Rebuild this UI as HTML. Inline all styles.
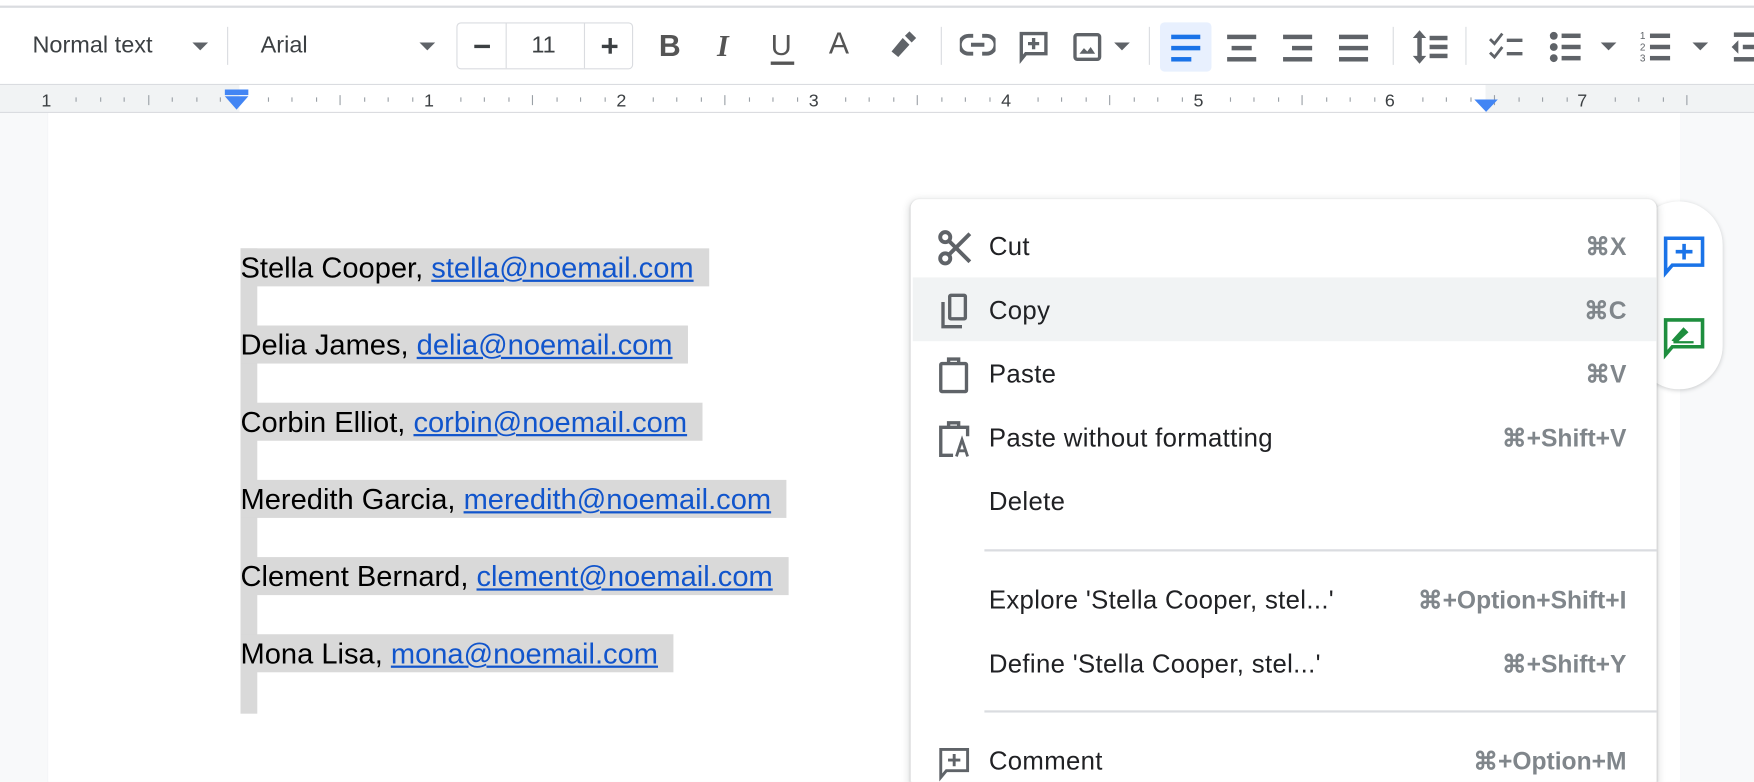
<!DOCTYPE html>
<html><head><meta charset="utf-8"><style>
*{margin:0;padding:0;box-sizing:border-box}
html,body{width:1754px;height:782px;overflow:hidden;background:#fff}
#w{position:absolute;left:0;top:0;width:1568px;height:699px;transform:scale(1.11862);transform-origin:0 0;font-family:"Liberation Sans",Arial,sans-serif;overflow:hidden;background:#f8f9fa}
.a{position:absolute}
.tb{color:#3c4043;font-size:21px}
.sep{position:absolute;top:24px;width:1px;height:34px;background:#dadce0}
.car{position:absolute;width:0;height:0;border-left:7px solid transparent;border-right:7px solid transparent;border-top:7px solid #5f6368}
.ln{position:absolute;left:215px;font-size:26px;color:#000;height:34px;line-height:34px;background:#d9d9d9;padding-right:14px;white-space:nowrap}
.ln u{color:#1155cc;text-decoration:underline}
.mi{position:absolute;left:0;right:0;height:57px;line-height:57px;font-size:23px;color:#202124;letter-spacing:.3px}
.mi .t{position:absolute;left:70px}
.mi .k{position:absolute;right:27px;color:#80868b;font-weight:bold;font-size:22px;letter-spacing:0}
.mi svg{position:absolute;left:24px;top:13px}
</style></head><body><div id="w">
<div class="a" style="left:0;top:0;width:1568px;height:76px;background:#fff"></div>
<div class="a" style="left:0;top:5px;width:1568px;height:2px;background:#dadce0"></div>
<div class="a tb" style="left:29px;top:29px">Normal text</div>
<div class="car" style="left:172px;top:38px"></div>
<div class="sep" style="left:203px"></div>
<div class="a tb" style="left:233px;top:29px">Arial</div>
<div class="car" style="left:375px;top:38px"></div>
<div class="a" style="left:408px;top:20px;width:158px;height:42px;border:1px solid #dadce0;border-radius:4px"></div>
<div class="a" style="left:452px;top:21px;width:1px;height:40px;background:#dadce0"></div>
<div class="a" style="left:522px;top:21px;width:1px;height:40px;background:#dadce0"></div>
<div class="a" style="left:424px;top:40px;width:14px;height:3px;background:#3c4043"></div>
<div class="a tb" style="left:475px;top:29px">11</div>
<div class="a" style="left:538px;top:40px;width:14px;height:3px;background:#3c4043"></div>
<div class="a" style="left:543.5px;top:34px;width:3px;height:14px;background:#3c4043"></div>
<div class="a" style="left:589px;top:26px;font-size:27px;font-weight:bold;color:#555">B</div>
<div class="a" style="left:641px;top:26px;font-size:27px;font-style:italic;color:#555;font-family:'Liberation Serif',serif;font-weight:bold">I</div>
<div class="a" style="left:689px;top:25px;font-size:26px;color:#555">U</div>
<div class="a" style="left:689px;top:55px;width:21px;height:3px;background:#555"></div>
<div class="a" style="left:741px;top:24px;font-size:27px;color:#555">A</div>
<svg class="a" style="left:793px;top:26px" width="28" height="26"><path d="M4 20 l10-12 6 6-10 11z M16 6 l4-4 6 6-4 4z" fill="#5f6368"/></svg>
<div class="sep" style="left:841px"></div>
<svg class="a" style="left:858px;top:29px" width="32" height="22" fill="none" stroke="#5f6368" stroke-width="3.5"><path d="M12 3H8a8 8 0 000 16h4M20 3h4a8 8 0 010 16h-4M10 11h12"/></svg>
<svg class="a" style="left:910px;top:27px" width="28" height="30" fill="none" stroke="#5f6368" stroke-width="3"><path d="M3 3h22v18H7l-4 5z M14 7v10M9 12h10"/></svg>
<svg class="a" style="left:959px;top:29px" width="28" height="28" fill="none" stroke="#5f6368" stroke-width="3"><rect x="2" y="2" width="22" height="22" rx="2"/><path d="M6 19l4-5 3 3 3-4 4 6z" fill="#5f6368" stroke="none"/></svg>
<div class="car" style="left:996px;top:38px"></div>
<div class="sep" style="left:1027px"></div>
<div class="a" style="left:1037px;top:20px;width:46px;height:44px;background:#e8f0fe;border-radius:4px"></div>
<svg class="a" style="left:1045px;top:29px" width="190" height="28">
<g fill="#1a73e8"><rect x="2" y="2" width="26" height="4"/><rect x="2" y="12" width="26" height="4"/><rect x="2" y="22" width="18" height="4"/></g>
<g fill="#5f6368"><rect x="52" y="2" width="26" height="4"/><rect x="56" y="12" width="18" height="4"/><rect x="52" y="22" width="26" height="4"/>
<rect x="102" y="2" width="26" height="4"/><rect x="110" y="12" width="18" height="4"/><rect x="102" y="22" width="26" height="4"/>
<rect x="152" y="2" width="26" height="4"/><rect x="152" y="12" width="26" height="4"/><rect x="152" y="22" width="26" height="4"/></g></svg>
<div class="sep" style="left:1245px"></div>
<svg class="a" style="left:1262px;top:26px" width="34" height="32" fill="#5f6368"><path d="M7 1l6 7H9v16h4l-6 7-6-7h4V8H1z"/><rect x="16" y="6" width="16" height="4"/><rect x="16" y="14" width="16" height="4"/><rect x="16" y="22" width="16" height="4"/></svg>
<div class="sep" style="left:1310px"></div>
<svg class="a" style="left:1330px;top:28px" width="34" height="28" fill="none" stroke="#5f6368" stroke-width="2.5"><path d="M2 7l4 4 7-9M2 19l4 4 7-9"/><path d="M17 8h14M17 20h14" stroke-width="3"/></svg>
<svg class="a" style="left:1385px;top:28px" width="30" height="28" fill="#5f6368"><circle cx="4" cy="4" r="3.5"/><circle cx="4" cy="14" r="3.5"/><circle cx="4" cy="24" r="3.5"/><rect x="11" y="2" width="17" height="4"/><rect x="11" y="12" width="17" height="4"/><rect x="11" y="22" width="17" height="4"/></svg>
<div class="car" style="left:1431px;top:38px"></div>
<svg class="a" style="left:1466px;top:27px" width="30" height="30" fill="#5f6368"><text x="0" y="8" font-size="9" font-family="Liberation Sans">1</text><text x="0" y="18" font-size="9" font-family="Liberation Sans">2</text><text x="0" y="28" font-size="9" font-family="Liberation Sans">3</text><rect x="9" y="3" width="18" height="4"/><rect x="9" y="13" width="18" height="4"/><rect x="9" y="23" width="18" height="4"/></svg>
<div class="car" style="left:1513px;top:38px"></div>
<svg class="a" style="left:1546px;top:27px" width="22" height="30" fill="#5f6368"><rect x="4" y="2" width="18" height="4"/><path d="M8 9v12l-6-6z"/><rect x="12" y="13" width="10" height="4"/><rect x="4" y="24" width="18" height="4"/></svg>
<div class="a" style="left:0;top:75px;width:1568px;height:1px;background:#dadce0"></div>
<div class="a" style="left:0;top:76px;width:1568px;height:25px;background:#f1f3f4"></div>
<div class="a" style="left:214px;top:76px;width:1114px;height:25px;background:#fff"></div>
<div class="a" style="left:0;top:100px;width:1568px;height:1px;background:#dadce0"></div>
<svg class="a" style="left:0;top:76px" width="1568" height="25" font-family="Liberation Sans" font-size="16" fill="#3c4043">
<g stroke="#9aa0a6" stroke-width="1">
<path d="M68 11v4M90 11v4M111 11v4M133 9v9M154 11v4M176 11v4M197 11v4M240 11v4M261 11v4M283 11v4M304 9v9M326 11v4M347 11v4M369 11v4M412 11v4M433 11v4M455 11v4M476 9v9M498 11v4M519 11v4M541 11v4M584 11v4M605 11v4M627 11v4M648 9v9M670 11v4M691 11v4M713 11v4M756 11v4M777 11v4M799 11v4M820 9v9M842 11v4M863 11v4M885 11v4M928 11v4M949 11v4M971 11v4M992 9v9M1014 11v4M1035 11v4M1057 11v4M1100 11v4M1121 11v4M1143 11v4M1164 9v9M1186 11v4M1207 11v4M1229 11v4M1272 11v4M1293 11v4M1315 11v4M1336 9v9M1358 11v4M1379 11v4M1401 11v4M1444 11v4M1465 11v4M1487 11v4M1508 9v9"/></g>
<text x="37" y="19">1</text><text x="379" y="19">1</text><text x="551" y="19">2</text><text x="723" y="19">3</text><text x="895" y="19">4</text><text x="1067" y="19">5</text><text x="1238" y="19">6</text><text x="1410" y="19">7</text>
<rect x="201" y="4" width="21" height="5" fill="#4285f4"/><path d="M201 10h21l-10.5 12z" fill="#4285f4"/>
<path d="M1318 13h21l-10.5 11z" fill="#4285f4"/>
</svg>
<div class="a" style="left:43px;top:101px;width:1459px;height:600px;background:#fff;box-shadow:0 0 1px #dadce0"></div>
<div class="a" style="left:215px;top:222px;width:15px;height:416px;background:#d9d9d9"></div>
<div class="ln" style="top:222px">Stella Cooper, <u>stella@noemail.com</u></div>
<div class="ln" style="top:291px">Delia James, <u>delia@noemail.com</u></div>
<div class="ln" style="top:360px">Corbin Elliot, <u>corbin@noemail.com</u></div>
<div class="ln" style="top:429px">Meredith Garcia, <u>meredith@noemail.com</u></div>
<div class="ln" style="top:498px">Clement Bernard, <u>clement@noemail.com</u></div>
<div class="ln" style="top:567px">Mona Lisa, <u>mona@noemail.com</u></div>
<div class="a" style="left:1462px;top:180px;width:78px;height:168px;background:#fff;border-radius:40px;box-shadow:0 1px 4px rgba(60,64,67,.25)"></div>
<svg class="a" style="left:1486px;top:210px" width="40" height="40" fill="none" stroke="#1a73e8" stroke-width="3.2"><path d="M3 3h33v24H9l-6 7z M19.5 8v14M12 15h15"/></svg>
<svg class="a" style="left:1486px;top:283px" width="40" height="40"><path d="M3 3h33v24H9l-6 7z" fill="none" stroke="#1e8e3e" stroke-width="3.2"/><path d="M10 21l9-10 3 3-9 8z M10 23h18" fill="#1e8e3e" stroke="#1e8e3e" stroke-width="2"/></svg>
<div class="a" style="left:814px;top:178px;width:667px;height:540px;background:#fff;border-radius:8px;box-shadow:0 2px 6px 2px rgba(60,64,67,.15),0 1px 2px rgba(60,64,67,.3)">
<div class="a" style="left:2px;right:0;top:70px;height:57px;background:#f1f3f4"></div>
<div class="mi" style="top:14px"><svg width="32" height="34" fill="none" stroke="#5f6368" stroke-width="3.5"><circle cx="7" cy="7" r="4.5"/><circle cx="7" cy="26" r="4.5"/><path d="M10 10l19 19M10 23l19-19"/></svg><span class="t">Cut</span><span class="k">⌘X</span></div>
<div class="mi" style="top:71px"><svg width="32" height="34" fill="none" stroke="#5f6368" stroke-width="3"><path d="M5 8v22h17"/><rect x="11" y="2" width="14" height="21" rx="1"/></svg><span class="t">Copy</span><span class="k">⌘C</span></div>
<div class="mi" style="top:128px"><svg width="32" height="34" fill="none" stroke="#5f6368" stroke-width="3"><rect x="3" y="6" width="23" height="25" rx="1"/><path d="M10 6V2h9v4"/></svg><span class="t">Paste</span><span class="k">⌘V</span></div>
<div class="mi" style="top:185px"><svg width="34" height="34" fill="none" stroke="#5f6368" stroke-width="3"><path d="M14 31H3V6h24v8M10 6V2h9v4"/><path d="M17 32l5-15 5 15M19 27h6" stroke-width="2.5"/></svg><span class="t">Paste without formatting</span><span class="k">⌘+Shift+V</span></div>
<div class="mi" style="top:242px"><span class="t">Delete</span></div>
<div class="a" style="left:66px;right:0;top:313px;height:2px;background:#dadce0"></div>
<div class="mi" style="top:330px"><span class="t">Explore 'Stella Cooper, stel...'</span><span class="k">⌘+Option+Shift+I</span></div>
<div class="mi" style="top:387px"><span class="t">Define 'Stella Cooper, stel...'</span><span class="k">⌘+Shift+Y</span></div>
<div class="a" style="left:66px;right:0;top:457px;height:2px;background:#dadce0"></div>
<div class="mi" style="top:474px"><svg width="32" height="36" fill="none" stroke="#5f6368" stroke-width="2.6"><path d="M3 5h24v19H8l-5 6z M15 9v11M9.5 14.5h11"/></svg><span class="t">Comment</span><span class="k">⌘+Option+M</span></div>
</div>
</div></body></html>
